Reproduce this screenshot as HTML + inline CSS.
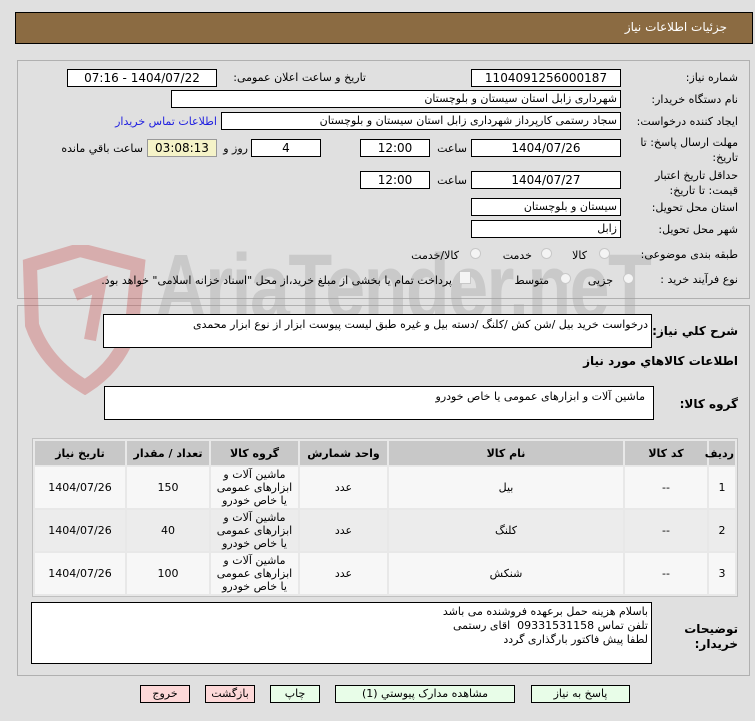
<!DOCTYPE html>
<html><head><meta charset="utf-8"><style>
body{margin:0;width:755px;height:721px;background:#e0e0e0;font-family:"DejaVu Sans","Liberation Sans",sans-serif;font-size:11px;color:#000;position:relative;overflow:hidden}
.a{position:absolute}
.box{position:absolute;background:#fff;border:1px solid #000;box-sizing:border-box;direction:rtl;padding:0 3px;line-height:16px;white-space:nowrap;overflow:hidden}
.c{text-align:center}
.l{position:absolute;direction:rtl;white-space:nowrap;text-align:right}
.panel{position:absolute;left:17px;width:733px;border:1px solid #b0b0b0;box-sizing:border-box}
.rad{position:absolute;width:11px;height:11px;border:1px solid #c8c8c8;border-radius:50%;background:#f4f4f4;box-sizing:border-box}
table{border-collapse:separate;border-spacing:2px;position:absolute;left:32px;top:438px;width:706px;direction:rtl;border:1px solid #c0c0c0;background:#e8e8e8;table-layout:fixed}
th{background:#c8c8c8;height:22px;font-weight:bold;font-size:11px}
td{text-align:center;height:39px;font-size:11px;line-height:13px}
tr.r1 td{background:#f7f7f7}tr.r2 td{background:#ececec}
.btn{position:absolute;top:685px;height:18px;border:1px solid #000;box-sizing:border-box;text-align:center;line-height:16px;font-size:11px;direction:rtl}
.g{background:#e8fde8}.p{background:#fdd8d8}
</style></head><body>
<div class="a" style="left:15px;top:12px;width:738px;height:32px;background:#8b6b42;border:1px solid #000;box-sizing:border-box"></div>
<div class="l" style="right:28px;top:19px;color:#fff;font-size:12px;line-height:16px">جزئیات اطلاعات نیاز</div>

<div class="panel" style="top:60px;height:239px"></div>
<div class="panel" style="top:305px;height:371px"></div>

<svg class="a" style="left:20px;top:245px;opacity:.35" width="130" height="150" viewBox="0 0 130 150"><path d="M10 20 L60 5 L118 20 L112 80 Q100 120 65 142 Q25 118 12 80 Z" fill="none" stroke="#c85050" stroke-width="14"/><path d="M55 50 L80 40 L70 95" fill="none" stroke="#c85050" stroke-width="12"/></svg>
<div class="a" style="left:155px;top:232px;font-size:92px;font-weight:bold;color:#a0a0a0;opacity:.35;font-family:'Liberation Sans',sans-serif;letter-spacing:-2px;transform:scaleX(.78);transform-origin:left top;line-height:110px">AriaTender.neT</div>

<div class="l" style="right:17px;top:71px">شماره نیاز:</div>
<div class="box c" style="left:471px;top:69px;width:150px;height:18px;font-size:12px">1104091256000187</div>
<div class="l" style="right:389px;top:71px">تاریخ و ساعت اعلان عمومی:</div>
<div class="box c" style="left:67px;top:69px;width:150px;height:18px;font-size:12px">1404/07/22 - 07:16</div>

<div class="l" style="right:17px;top:93px">نام دستگاه خریدار:</div>
<div class="box" style="left:171px;top:90px;width:450px;height:18px">شهرداری زابل استان سیستان و بلوچستان</div>

<div class="l" style="right:17px;top:115px">ایجاد کننده درخواست:</div>
<div class="box" style="left:221px;top:112px;width:400px;height:18px">سجاد رستمی کارپرداز شهرداری زابل استان سیستان و بلوچستان</div>
<div class="l" style="right:538px;top:115px;color:#2020e0">اطلاعات تماس خریدار</div>

<div class="l" style="right:17px;top:135px;line-height:15px">مهلت ارسال پاسخ: تا<br>تاریخ:</div>
<div class="box c" style="left:471px;top:139px;width:150px;height:18px;font-size:12px">1404/07/26</div>
<div class="l" style="right:288px;top:142px">ساعت</div>
<div class="box c" style="left:360px;top:139px;width:70px;height:18px;font-size:12px">12:00</div>
<div class="box c" style="left:251px;top:139px;width:70px;height:18px;font-size:12px">4</div>
<div class="l" style="right:507px;top:142px">روز و</div>
<div class="box c" style="left:147px;top:139px;width:70px;height:18px;font-size:12px;background:#f5f3c8;border-color:#999">03:08:13</div>
<div class="l" style="right:612px;top:142px">ساعت باقي مانده</div>

<div class="l" style="right:17px;top:168px;line-height:15px">حداقل تاریخ اعتبار<br>قیمت: تا تاریخ:</div>
<div class="box c" style="left:471px;top:171px;width:150px;height:18px;font-size:12px">1404/07/27</div>
<div class="l" style="right:288px;top:174px">ساعت</div>
<div class="box c" style="left:360px;top:171px;width:70px;height:18px;font-size:12px">12:00</div>

<div class="l" style="right:17px;top:201px">استان محل تحویل:</div>
<div class="box" style="left:471px;top:198px;width:150px;height:18px">سیستان و بلوچستان</div>
<div class="l" style="right:17px;top:223px">شهر محل تحویل:</div>
<div class="box" style="left:471px;top:220px;width:150px;height:18px">زابل</div>

<div class="l" style="right:17px;top:248px">طبقه بندی موضوعی:</div>
<div class="rad" style="left:599px;top:248px"></div><div class="l" style="right:168px;top:249px">کالا</div>
<div class="rad" style="left:541px;top:248px"></div><div class="l" style="right:223px;top:249px">خدمت</div>
<div class="rad" style="left:470px;top:248px"></div><div class="l" style="right:296px;top:249px">کالا/خدمت</div>

<div class="l" style="right:17px;top:273px">نوع فرآیند خرید :</div>
<div class="rad" style="left:623px;top:273px"></div><div class="l" style="right:142px;top:274px">جزیی</div>
<div class="rad" style="left:560px;top:273px"></div><div class="l" style="right:206px;top:274px">متوسط</div>
<div class="a" style="left:459px;top:271px;width:12px;height:13px;border:1px solid #c8c8c8;background:#f4f4f4;box-sizing:border-box"></div>
<div class="l" style="right:303px;top:274px">پرداخت تمام یا بخشی از مبلغ خرید،از محل "اسناد خزانه اسلامی" خواهد بود.</div>

<div class="l" style="right:17px;top:324px;font-weight:bold;font-size:12px">شرح کلي نياز:</div>
<div class="box" style="left:103px;top:314px;width:549px;height:34px;line-height:18px;padding-top:1px">درخواست خرید بیل /شن کش /کلنگ /دسته بیل و غیره طبق لیست پیوست ابزار از نوع ابزار محمدی</div>
<div class="l" style="right:17px;top:354px;font-weight:bold;font-size:12px">اطلاعات کالاهاي مورد نياز</div>
<div class="l" style="right:17px;top:397px;font-weight:bold;font-size:12px">گروه کالا:</div>
<div class="box" style="left:104px;top:386px;width:550px;height:34px;line-height:18px;padding-top:1px;padding-right:8px">ماشین آلات و ابزارهای عمومی یا خاص خودرو</div>

<table>
<colgroup><col style="width:26px"><col style="width:82px"><col style="width:234px"><col style="width:87px"><col style="width:87px"><col style="width:82px"><col></colgroup>
<tr><th>رديف</th><th>کد کالا</th><th>نام کالا</th><th>واحد شمارش</th><th>گروه کالا</th><th>تعداد / مقدار</th><th>تاريخ نياز</th></tr>
<tr class="r1"><td>1</td><td>--</td><td>بیل</td><td>عدد</td><td>ماشین آلات و<br>ابزارهای عمومی<br>یا خاص خودرو</td><td>150</td><td>1404/07/26</td></tr>
<tr class="r2"><td>2</td><td>--</td><td>کلنگ</td><td>عدد</td><td>ماشین آلات و<br>ابزارهای عمومی<br>یا خاص خودرو</td><td>40</td><td>1404/07/26</td></tr>
<tr class="r1"><td>3</td><td>--</td><td>شنکش</td><td>عدد</td><td>ماشین آلات و<br>ابزارهای عمومی<br>یا خاص خودرو</td><td>100</td><td>1404/07/26</td></tr>
</table>

<div class="l" style="right:17px;top:622px;font-weight:bold;font-size:12px;line-height:15px">توضیحات<br>خریدار:</div>
<div class="box" style="left:31px;top:602px;width:621px;height:62px;line-height:14px;padding-top:2px;white-space:normal">باسلام هزینه حمل برعهده فروشنده می باشد<br>تلفن تماس 09331531158&nbsp; اقای رستمی<br>لطفا پیش فاکتور بارگذاری گردد</div>

<div class="btn g" style="left:531px;width:99px">پاسخ به نياز</div>
<div class="btn g" style="left:335px;width:180px">مشاهده مدارک پيوستي (1)</div>
<div class="btn g" style="left:270px;width:50px">چاپ</div>
<div class="btn p" style="left:205px;width:50px">بازگشت</div>
<div class="btn p" style="left:140px;width:50px">خروج</div>
</body></html>
